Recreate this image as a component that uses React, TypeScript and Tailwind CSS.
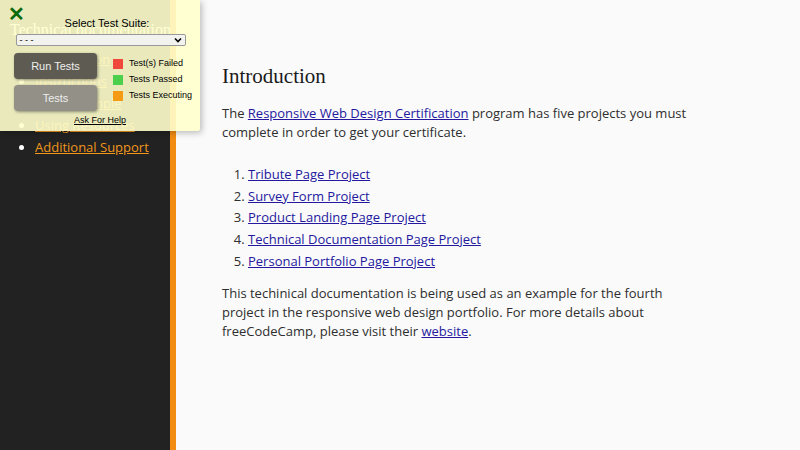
import React from "react";

const poppins = { fontFamily: '"Open Sans", "Noto Sans", sans-serif' } as const;

export default function App() {
  return (
    <div className="relative w-[800px] h-[450px] overflow-hidden flex bg-[#fafafa]">
      {/* Sidebar */}
      <nav className="w-[176px] h-full bg-[#222222] border-r-[6px] border-[#f28c13] shrink-0 pt-[19px] pl-[10px]">
        <header className="text-white text-[16px] leading-[22px] whitespace-nowrap" style={{ fontFamily: '"Liberation Serif", serif' }}>
          Technical documentation
        </header>
        <ul className="list-disc pl-[25px] mt-[7px] text-white text-[13px] leading-[22px]" style={poppins}>
          {["Introduction", "Instructions", "Keep It Simple", "Using Resources", "Additional Support"].map((t) => (
            <li key={t}>
              <a className="text-[#f0961c] underline">{t}</a>
            </li>
          ))}
        </ul>
      </nav>

      {/* Main */}
      <main className="pl-[46px] pt-[62px] w-[520px] text-[#2e2e2e] text-[13px] leading-[19px]" style={poppins}>
        <h2 className="text-[21px] leading-[28px] text-[#1a1a1a] mb-[14px]" style={{ fontFamily: '"Liberation Serif", serif' }}>
          Introduction
        </h2>
        <p>
          The <a className="text-[#24199e] underline">Responsive Web Design Certification</a> program has five projects you must complete in order to get your certificate.
        </p>
        <ol className="list-decimal pl-[26px] mt-[22px] leading-[21.7px]">
          {["Tribute Page Project", "Survey Form Project", "Product Landing Page Project", "Technical Documentation Page Project", "Personal Portfolio Page Project"].map((t) => (
            <li key={t}>
              <a className="text-[#24199e] underline">{t}</a>
            </li>
          ))}
        </ol>
        <p className="mt-[11px]">
          This techinical documentation is being used as an example for the fourth project in the responsive web design portfolio. For more details about freeCodeCamp, please visit their <a className="text-[#24199e] underline">website</a>.
        </p>
      </main>

      {/* fCC test suite overlay */}
      <div
        className="absolute left-0 top-0 w-[200px] h-[131px] bg-[rgba(255,255,205,0.9)] shadow-[2px_2px_6px_rgba(0,0,0,0.25)] rounded-br-[3px] text-black"
        style={{ fontFamily: '"Liberation Sans", Arial, sans-serif' }}
      >
        <div className="absolute left-[8px] top-[4px] text-[#0b6b0b] text-[20px] font-bold leading-[20px]">✕</div>
        <div className="flex flex-col items-center pt-[17px]">
          <div className="text-[11px] leading-[13px] pl-[14px]">Select Test Suite:</div>
          <div className="mt-[4px] ml-[1px] w-[170px] h-[12px] bg-[#f2f2ee] border border-[#999] rounded-[2px] flex items-center justify-between px-[3px] text-[9px] leading-[9px]">
            <span>- - -</span>
            <svg width="8" height="6" viewBox="0 0 8 6"><path d="M1 1.5 L4 4.5 L7 1.5" stroke="#000" strokeWidth="1.6" fill="none" /></svg>
          </div>
        </div>
        <div className="flex mt-[7px] pl-[14px]">
          <div className="flex flex-col gap-[6px]">
            <div className="w-[83px] h-[26px] rounded-[4px] bg-[#5e5c52] text-[#eee] text-[11px] flex items-center justify-center shadow-[1px_1px_3px_rgba(0,0,0,0.4)]">Run Tests</div>
            <div className="w-[83px] h-[26px] rounded-[4px] bg-[#929087] text-[#eee] text-[11px] flex items-center justify-center shadow-[1px_1px_3px_rgba(0,0,0,0.4)]">Tests</div>
          </div>
          <div className="flex flex-col gap-[5px] ml-[16px] mt-[5px] text-[9px] leading-[11px]">
            <div className="flex items-center gap-[6px]"><span className="w-[10px] h-[10px] bg-[#f0493c]" /> Test(s) Failed</div>
            <div className="flex items-center gap-[6px]"><span className="w-[10px] h-[10px] bg-[#4cd04c]" /> Tests Passed</div>
            <div className="flex items-center gap-[6px]"><span className="w-[10px] h-[10px] bg-[#f59a14]" /> Tests Executing</div>
          </div>
        </div>
        <div className="text-center text-[9px] underline mt-[3px]">Ask For Help</div>
      </div>
    </div>
  );
}
